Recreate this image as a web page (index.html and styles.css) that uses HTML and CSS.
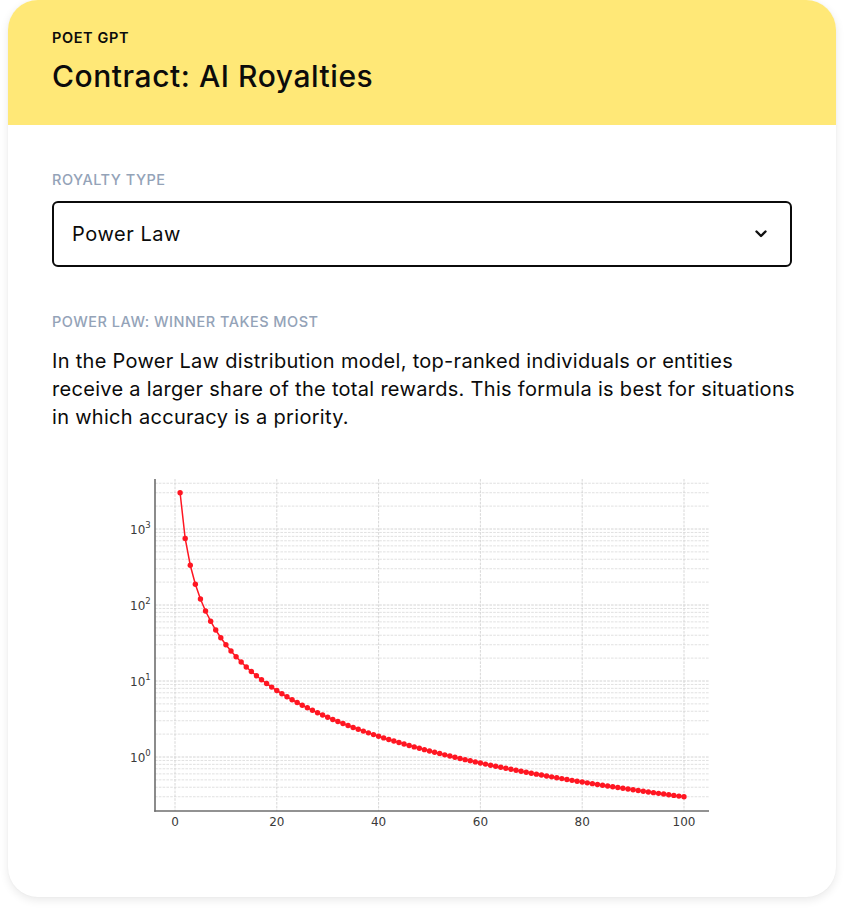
FILE: index.html
```html
<!DOCTYPE html>
<html lang="en">
<head>
<meta charset="utf-8">
<title>Contract: AI Royalties</title>
<link rel="stylesheet" href="styles.css">
</head>
<body>
<div class="card">
  <header class="card-header">
    <div class="eyebrow">POET GPT</div>
    <h1 class="title">Contract: AI Royalties</h1>
  </header>
  <section class="card-body">
    <div class="label">ROYALTY TYPE</div>
    <div class="select">
      <span class="select-value">Power Law</span>
      <svg class="chevron" width="14" height="10" viewBox="0 0 14 10"><path d="M2.5 2.5 L7 7 L11.5 2.5" fill="none" stroke="#111" stroke-width="2.4" stroke-linecap="round" stroke-linejoin="round"/></svg>
    </div>
    <div class="label label-second">POWER LAW: WINNER TAKES MOST</div>
    <p class="desc">In the Power Law distribution model, top-ranked individuals or entities receive a larger share of the total rewards. This formula is best for situations in which accuracy is a priority.</p>
    <svg class="chart" width="630" height="380" viewBox="100 460 630 380">
      <g id="grid"></g>
      <g id="axes"></g>
      <g id="series"></g>
    </svg>
  </section>
</div>
<script src="script.js"></script>
</body>
</html>
```

FILE: styles.css
```css
* { box-sizing: border-box; }
html, body { margin: 0; padding: 0; background: #ffffff; }
body {
  font-family: Inter, "Noto Sans", sans-serif;
  color: #0b0b0b;
  width: 844px;
  height: 910px;
  overflow: hidden;
}
.card {
  margin: 0 8px;
  width: 828px;
  height: 897px;
  border-radius: 30px;
  background: #ffffff;
  overflow: hidden;
  box-shadow: 0 3px 10px rgba(0, 0, 0, 0.09), 0 0 2px rgba(0, 0, 0, 0.04);
  display: flex;
  flex-direction: column;
}
.card-header {
  background: #FFE877;
  height: 125px;
  padding: 28px 44px 0;
  flex: none;
}
.eyebrow {
  font-size: 14.5px;
  line-height: 20px;
  font-weight: 600;
  letter-spacing: 0.6px;
}
.title {
  margin: 10px 0 0;
  font-size: 30px;
  line-height: 36px;
  font-weight: 500;
  letter-spacing: 0.55px;
}
.card-body {
  padding: 45px 44px 0;
  display: flex;
  flex-direction: column;
}
.label {
  font-size: 14.5px;
  line-height: 20px;
  font-weight: 500;
  color: #94A3B8;
  letter-spacing: 0.5px;
}
.select {
  margin-top: 11px;
  height: 66px;
  border: 2px solid #0b0b0b;
  border-radius: 6px;
  padding: 0 22px 0 18px;
  display: flex;
  align-items: center;
  justify-content: space-between;
}
.select-value {
  font-size: 20px;
  line-height: 28px;
  letter-spacing: 0.55px;
}
.chevron { display: block; }
.label-second { margin-top: 45px; }
.desc {
  margin: 15px -8px 0 0;
  font-size: 20px;
  line-height: 28px;
  font-weight: 400;
  letter-spacing: 0.3px;
}
.chart {
  display: block;
  margin: 28px 0 0 48px;
}
.chart text {
  font-family: "DejaVu Sans", sans-serif;
  fill: #3a3a3a;
}
```

FILE: script.js
```js
(function () {
  var NS = "http://www.w3.org/2000/svg";
  var grid = document.getElementById("grid");
  var axes = document.getElementById("axes");
  var series = document.getElementById("series");
  var L = 155, R = 709, T = 480, B = 812;
  function X(v) { return 175 + 5.09 * v; }
  function Y(v) { return 758 - 76 * Math.log10(v); }
  function el(tag, attrs, parent) {
    var e = document.createElementNS(NS, tag);
    for (var k in attrs) e.setAttribute(k, attrs[k]);
    parent.appendChild(e);
    return e;
  }
  for (var k = -1; k <= 3; k++) {
    for (var m = 1; m <= 9; m++) {
      var v = m * Math.pow(10, k);
      var y = Y(v);
      if (y < T || y > B - 1) continue;
      el("line", { x1: L, y1: y, x2: R, y2: y, stroke: m === 1 ? "#cfcfcf" : "#dedede", "stroke-width": 0.9, "stroke-dasharray": "2.6,1.2" }, grid);
    }
  }
  for (var t = 0; t <= 100; t += 20) {
    el("line", { x1: X(t), y1: T, x2: X(t), y2: B, stroke: "#d2d2d2", "stroke-width": 0.9, "stroke-dasharray": "2.6,1.2" }, grid);
  }
  el("line", { x1: L, y1: T, x2: L, y2: B + 0.8, stroke: "#6e6e6e", "stroke-width": 1.6 }, axes);
  el("line", { x1: L - 0.8, y1: B, x2: R, y2: B, stroke: "#6e6e6e", "stroke-width": 1.6 }, axes);
  for (var p = 0; p <= 3; p++) {
    var yy = Y(Math.pow(10, p));
    var tx = el("text", { x: 130, y: yy + 4.5, "font-size": 12 }, axes);
    tx.appendChild(document.createTextNode("10"));
    var sup = el("tspan", { dy: -5.5, "font-size": 8.5 }, tx);
    sup.appendChild(document.createTextNode(String(p)));
  }
  for (var t2 = 0; t2 <= 100; t2 += 20) {
    var lx = el("text", { x: X(t2), y: 826.5, "font-size": 12, "text-anchor": "middle" }, axes);
    lx.appendChild(document.createTextNode(String(t2)));
  }
  var pts = [];
  for (var i = 1; i <= 100; i++) {
    pts.push(X(i).toFixed(2) + "," + Y(3000 / (i * i)).toFixed(2));
  }
  el("polyline", { points: pts.join(" "), fill: "none", stroke: "#ff1622", "stroke-width": 1.5 }, series);
  for (var j = 1; j <= 100; j++) {
    el("circle", { cx: X(j), cy: Y(3000 / (j * j)), r: 2.7, fill: "#ff1622" }, series);
  }
})();
```
